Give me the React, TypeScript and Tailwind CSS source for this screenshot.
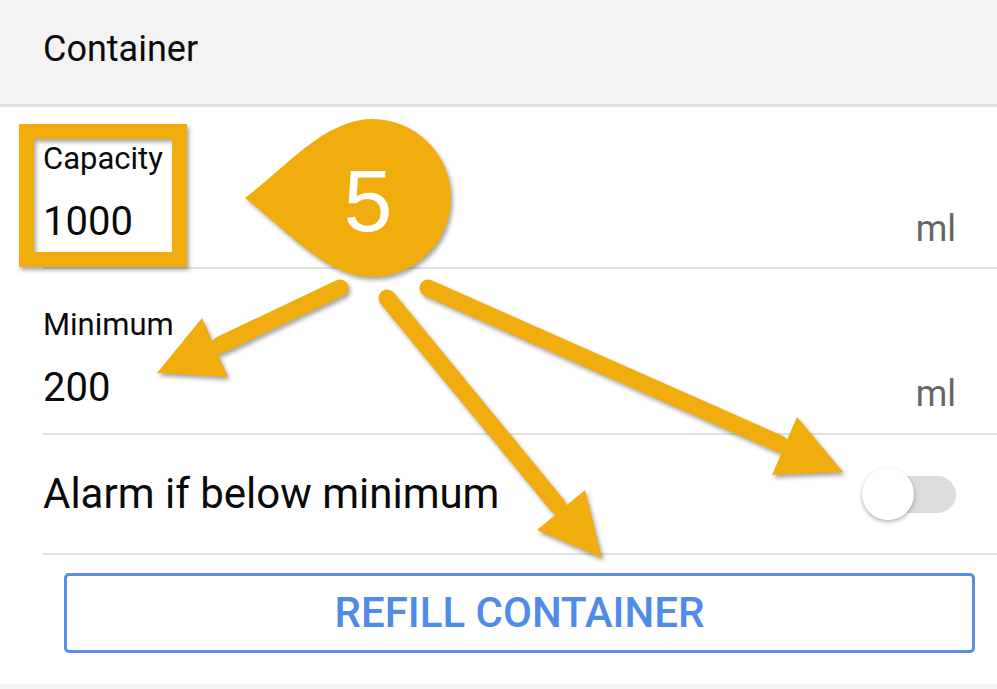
import React from "react";

const Y = "#f1ad0e";

function Annotations() {
  return (
    <svg
      className="absolute left-0 top-0 pointer-events-none"
      width={997}
      height={689}
      viewBox="0 0 997 689"
      style={{ filter: "drop-shadow(2px 3px 2px rgba(0,0,0,0.35))" }}
    >
      <rect x={26.5} y={131.5} width={153} height={128} fill="none" stroke={Y} strokeWidth={15} />
      <path
        d="M245 198 C 285 168, 325 119, 372 119 A 79 79 0 0 1 372 277 C 325 277, 285 228, 245 198 Z"
        fill={Y}
      />
      <text
        x={368}
        y={231}
        textAnchor="middle"
        fill="#ffffff"
        fontSize={88}
        style={{ fontFamily: "'Liberation Sans', Arial, sans-serif" }}
      >
        5
      </text>
      <g stroke={Y} strokeWidth={17} strokeLinecap="round">
        <line x1={340} y1={288} x2={220} y2={345} />
        <line x1={387} y1={298} x2={558} y2={506} />
        <line x1={428} y1={288} x2={780} y2={444} />
      </g>
      <g fill={Y}>
        <polygon points="157,373 202,318 228,377" />
        <polygon points="602,558 537,530 585,490" />
        <polygon points="843,472 797,417 772,475" />
      </g>
    </svg>
  );
}

export default function App() {
  return (
    <div
      className="relative w-[997px] h-[689px] overflow-hidden bg-white text-[#0a0a0a]"
      style={{ fontFamily: "Roboto, 'Liberation Sans', sans-serif" }}
    >
      <div className="h-[107px] bg-[#f3f3f3] border-b-[3px] border-[#e0e0e0] pl-[43px] pt-[31px]">
        <div className="text-[36px] leading-none">Container</div>
      </div>

      <div className="ml-[43px] h-[162px] border-b-2 border-[#e2e2e2] flex justify-between pr-[41px]">
        <div className="flex flex-col pt-[36px]">
          <div className="text-[31px] leading-none">Capacity</div>
          <div className="text-[40px] leading-none mt-[28px]">1000</div>
        </div>
        <div className="text-[36px] leading-none text-[#666666] mt-[104px]">ml</div>
      </div>

      <div className="ml-[43px] h-[166px] border-b-2 border-[#e2e2e2] flex justify-between pr-[41px]">
        <div className="flex flex-col pt-[40px]">
          <div className="text-[31px] leading-none">Minimum</div>
          <div className="text-[40px] leading-none mt-[28px]">200</div>
        </div>
        <div className="text-[36px] leading-none text-[#666666] mt-[107px]">ml</div>
      </div>

      <div className="ml-[43px] h-[120px] border-b-2 border-[#e2e2e2] flex items-center justify-between pr-[41px]">
        <div className="text-[42px] leading-none">Alarm if below minimum</div>
        <div className="relative w-[94px] h-[52px]">
          <div className="absolute right-0 top-[8px] w-[86px] h-[37px] rounded-full bg-[#dcdcdc]" />
          <div className="absolute left-0 top-0 w-[52px] h-[52px] rounded-full bg-white shadow-[0_2px_4px_rgba(0,0,0,0.3)]" />
        </div>
      </div>

      <div className="h-[129px] pt-[18px] pl-[64px] pr-[22px]">
        <div className="h-[80px] border-[3px] border-[#5b8de6] rounded-[5px] flex items-center justify-center">
          <span className="text-[42px] leading-none font-medium text-[#4f8be9]">
            REFILL CONTAINER
          </span>
        </div>
      </div>

      <div className="h-[5px] bg-[#f3f3f3]" />

      <Annotations />
    </div>
  );
}
